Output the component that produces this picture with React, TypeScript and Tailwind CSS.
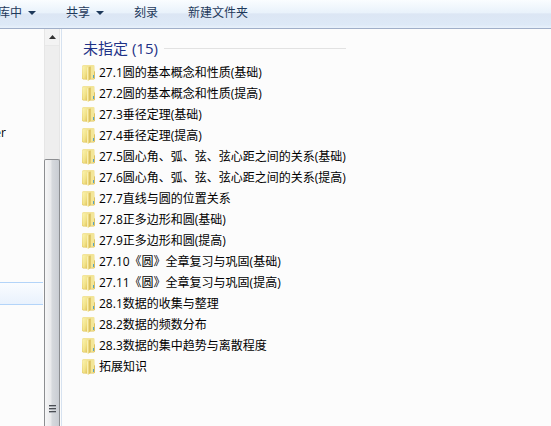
import React from 'react'

const folders = [
  '27.1圆的基本概念和性质(基础)',
  '27.2圆的基本概念和性质(提高)',
  '27.3垂径定理(基础)',
  '27.4垂径定理(提高)',
  '27.5圆心角、弧、弦、弦心距之间的关系(基础)',
  '27.6圆心角、弧、弦、弦心距之间的关系(提高)',
  '27.7直线与圆的位置关系',
  '27.8正多边形和圆(基础)',
  '27.9正多边形和圆(提高)',
  '27.10《圆》全章复习与巩固(基础)',
  '27.11《圆》全章复习与巩固(提高)',
  '28.1数据的收集与整理',
  '28.2数据的频数分布',
  '28.3数据的集中趋势与离散程度',
  '拓展知识',
]

function Caret() {
  return (
    <svg className="w-2 h-1" viewBox="0 0 8 4" fill="#1e395b">
      <path d="M0 0h8L4 4z" />
    </svg>
  )
}

function FolderIcon() {
  return (
    <svg className="w-[14px] h-4 shrink-0" viewBox="0 0 14 16">
      <defs>
        <linearGradient id="folder-back" x1="0" x2="0" y1="0" y2="1">
          <stop offset="0" stopColor="#f3e59c" />
          <stop offset="1" stopColor="#dfc257" />
        </linearGradient>
        <linearGradient id="folder-front" x1="0" x2="1" y1="0" y2="1">
          <stop offset="0" stopColor="#faf4b4" />
          <stop offset="0.6" stopColor="#f2e389" />
          <stop offset="1" stopColor="#e0c35c" />
        </linearGradient>
        <linearGradient id="folder-flap" x1="0" x2="1" y1="0" y2="0">
          <stop offset="0" stopColor="#fdf9cf" />
          <stop offset="0.35" stopColor="#f1e08a" />
          <stop offset="1" stopColor="#ccaa41" />
        </linearGradient>
      </defs>
      <path d="M0 1.500Q0 0 1.500 0H11.500Q12.500 0 12.500 1V6L13 7V13.500L12 14.500H1L0 13.500z" fill="url(#folder-back)" />
      <path d="M0.500 1.500L5 1V14.500L0.500 13.500z" fill="url(#folder-front)" />
      <path d="M8 1.500L11.500 1Q12 1 12 2V13.500L8 14z" fill="#f3e698" />
      <path d="M5 2.500L8.500 1.500V14L6 16L5 15z" fill="url(#folder-flap)" />
      <path d="M11.500 10v3" stroke="#58a5c4" strokeWidth="1" />
      <path d="M12.500 6.500v7" stroke="#dcc263" strokeWidth="1" />
    </svg>
  )
}

function Toolbar() {
  return (
    <header className="flex items-center h-[29px] shrink-0 pb-0.5 overflow-hidden whitespace-nowrap text-[#1e395b] border-b border-[#a0afc9] bg-[linear-gradient(#fafdff_0%,#e9f2fb_45%,#dce6f4_50%,#dde9f7_88%,#e8f1fb_100%)]">
      <button className="flex items-center gap-1.5 -ml-0.5">
        库中
        <Caret />
      </button>
      <button className="flex items-center gap-1.5 ml-[30px]">
        共享
        <Caret />
      </button>
      <button className="ml-[30px]">刻录</button>
      <button className="ml-[30px]">新建文件夹</button>
    </header>
  )
}

function NavPane() {
  return (
    <nav className="w-11 shrink-0 overflow-hidden pr-px">
      <a href="#user" className="flex justify-end w-1.5 mt-[95px] h-[18px] leading-[18px]">
        er
      </a>
      <div className="mt-[140px] h-[23px] border-y border-[#b3d4f9] bg-gradient-to-b from-[#fafcff] to-[#e9f2fd]" />
    </nav>
  )
}

function ScrollBar() {
  return (
    <div className="flex flex-col w-4 shrink-0 bg-[#eeeeee] border-x border-[#e6e6e6]">
      <button aria-label="向上滚动" className="flex items-center justify-center h-[17px] shrink-0 bg-[#f3f3f3] border-b border-[#e8e8e8]">
        <svg className="w-[7px] h-1" viewBox="0 0 7 4" fill="#333333">
          <path d="M3.500 0L7 4H0z" />
        </svg>
      </button>
      <div className="flex flex-col items-center justify-end grow mt-[113px] -mx-px pb-[13px] border-x border-t border-[#8c8e91] rounded-t-xs bg-[linear-gradient(90deg,#f6f6f7_0%,#e9eaec_42%,#d6d9dd_50%,#c9cdd3_100%)]">
        <svg className="w-[7px] h-2" viewBox="0 0 7 8" shapeRendering="crispEdges">
          <path d="M0 0h7v1H0zM0 3h7v1H0zM0 6h7v1H0z" fill="#4a4e54" />
          <path d="M0 1h7v1H0zM0 4h7v1H0zM0 7h7v1H0z" fill="#a9adb3" />
        </svg>
      </div>
    </div>
  )
}

export default function App() {
  return (
    <div className="flex flex-col h-screen overflow-hidden bg-[#fcfcfc] text-black text-[12px] font-['Open_Sans','Noto_Sans_CJK_SC',sans-serif]">
      <Toolbar />
      <div className="flex grow min-h-0">
        <NavPane />
        <ScrollBar />
        <main className="grow min-w-0 ml-px border-l border-[#d6e2f0] pl-5 pt-2 overflow-hidden">
          {/* Group header */}
          <div className="flex items-center gap-1.5 h-[22px] pl-px w-[264px] max-w-full text-[#1e3287]">
            <h2 className="text-[15px] leading-[22px] whitespace-nowrap">未指定 (15)</h2>
            <div className="grow h-px bg-[#e2e2e2]" />
          </div>

          {/* Folder list */}
          <ul className="pt-[3px]">
            {folders.map((name) => (
              <li key={name}>
                <button className="flex items-center gap-[3px] h-[21px] leading-[21px] whitespace-nowrap">
                  <FolderIcon />
                  {name}
                </button>
              </li>
            ))}
          </ul>
        </main>
      </div>
    </div>
  )
}
